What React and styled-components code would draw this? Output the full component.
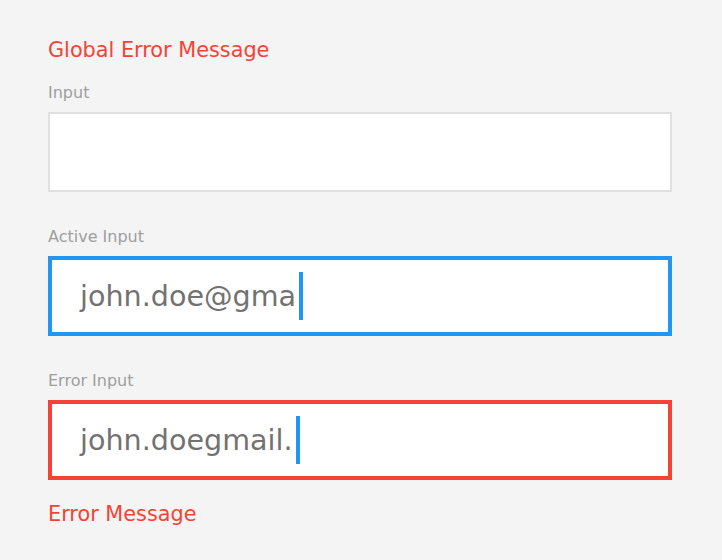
import React from 'react';
import styled, { createGlobalStyle } from 'styled-components';

const GlobalStyle = createGlobalStyle`
  body {
    margin: 0;
    background-color: #f4f4f4;
    font-family: "DejaVu Sans", "Liberation Sans", sans-serif;
  }
`;

const colors = {
  idle: '#e0e0e0',
  active: '#2196f3',
  error: '#f44336',
};

const Page = styled.div`
  width: 624px;
  padding: 38px 0 40px 48px;
  display: flex;
  flex-direction: column;
`;

const GlobalError = styled.div`
  color: #f44336;
  font-size: 20.8px;
  line-height: 24px;
  margin-bottom: 21px;
`;

const Fields = styled.div`
  display: flex;
  flex-direction: column;
  gap: 35px;
`;

const Field = styled.div`
  display: flex;
  flex-direction: column;
  gap: 9px;
`;

const Label = styled.label`
  color: #9e9e9e;
  font-size: 16px;
  line-height: 20px;
`;

const Box = styled.div`
  box-sizing: border-box;
  height: 80px;
  background-color: #ffffff;
  border: ${(p) => (p.$state === 'idle' ? '2px' : '4px')} solid ${(p) => colors[p.$state]};
  padding-left: 28px;
  display: flex;
  align-items: center;
`;

const Value = styled.span`
  color: #727272;
  font-size: 28.6px;
  line-height: 29px;
  white-space: nowrap;
`;

const Caret = styled.span`
  display: inline-block;
  width: 4px;
  height: 48px;
  margin-left: 3px;
  background-color: #2196f3;
`;

const ErrorMessage = styled.div`
  color: #f44336;
  font-size: 20.8px;
  line-height: 24px;
  margin-top: 22px;
`;

const TextField = ({ label, value, state, focused }) => (
  <Field>
    <Label>{label}</Label>
    <Box $state={state}>
      {value && <Value>{value}</Value>}
      {focused && <Caret />}
    </Box>
  </Field>
);

export default function App() {
  return (
    <>
      <GlobalStyle />
      <Page>
        <GlobalError>Global Error Message</GlobalError>
        <Fields>
          <TextField label="Input" state="idle" />
          <TextField label="Active Input" state="active" value="john.doe@gma" focused />
          <TextField label="Error Input" state="error" value="john.doegmail." focused />
        </Fields>
        <ErrorMessage>Error Message</ErrorMessage>
      </Page>
    </>
  );
}
